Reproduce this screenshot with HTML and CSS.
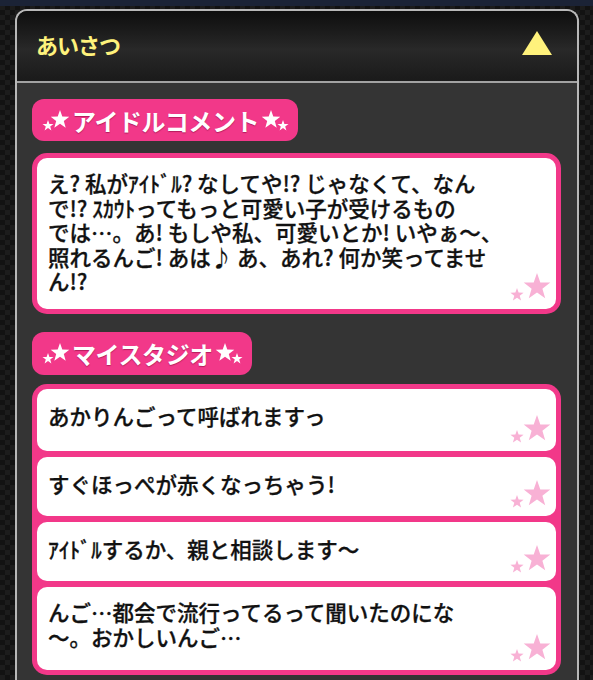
FILE: index.html
```html
<!DOCTYPE html>
<html lang="ja">
<head>
<meta charset="utf-8">
<link rel="stylesheet" href="styles.css">
</head>
<body>
<div class="page">
  <div class="panel">
    <div class="header">
      <span class="title">あいさつ</span>
      <svg class="tri" width="32" height="26" viewBox="0 0 32 26"><polygon points="16,1 31,25 1,25" fill="#fff27c"/></svg>
    </div>
    <div class="content">
      <div class="label">
        <svg class="lstars" width="28" height="24" viewBox="0 0 28 24">
          <polygon fill="#fff" points="6,12 7.4,15.9 11.5,16 8.2,18.5 9.4,22.4 6,20.1 2.6,22.4 3.8,18.5 0.5,16 4.6,15.9"/>
          <polygon fill="#fff" points="18,2 20.3,8.6 27.3,8.8 21.8,13 23.7,19.7 18,15.8 12.3,19.7 14.2,13 8.7,8.8 15.7,8.6"/>
        </svg>
        <span class="ltext">アイドルコメント</span>
        <svg class="lstars" width="28" height="24" viewBox="0 0 28 24">
          <polygon fill="#fff" points="10,2 12.3,8.6 19.3,8.8 13.8,13 15.7,19.7 10,15.8 4.3,19.7 6.2,13 0.7,8.8 7.7,8.6"/>
          <polygon fill="#fff" points="22,12 23.4,15.9 27.5,16 24.2,18.5 25.4,22.4 22,20.1 18.6,22.4 19.8,18.5 16.5,16 20.6,15.9"/>
        </svg>
      </div>
      <div class="card comment">
        <p class="msg">え? 私がｱｲﾄﾞﾙ? なしてや!? じゃなくて、なん<br>で!? ｽｶｳﾄってもっと可愛い子が受けるもの<br>では…。あ! もしや私、可愛いとか! いやぁ〜、<br>照れるんご! あは♪ あ、あれ? 何か笑ってませ<br>ん!?</p>
        <svg class="cstars" width="44" height="34" viewBox="0 0 44 34"><polygon fill="#f8b1d5" points="9,17 10.6,21.6 15.6,21.8 11.7,24.8 13.1,29.6 9,26.8 4.9,29.6 6.3,24.8 2.4,21.8 7.4,21.6"/><polygon fill="#f8b1d5" points="29,2 32.3,11.4 42.3,11.6 34.4,17.7 37.2,27.3 29,21.6 20.8,27.3 23.6,17.7 15.7,11.6 25.7,11.4"/></svg>
      </div>
      <div class="label label2">
        <svg class="lstars" width="28" height="24" viewBox="0 0 28 24">
          <polygon fill="#fff" points="6,12 7.4,15.9 11.5,16 8.2,18.5 9.4,22.4 6,20.1 2.6,22.4 3.8,18.5 0.5,16 4.6,15.9"/>
          <polygon fill="#fff" points="18,2 20.3,8.6 27.3,8.8 21.8,13 23.7,19.7 18,15.8 12.3,19.7 14.2,13 8.7,8.8 15.7,8.6"/>
        </svg>
        <span class="ltext">マイスタジオ</span>
        <svg class="lstars" width="28" height="24" viewBox="0 0 28 24">
          <polygon fill="#fff" points="10,2 12.3,8.6 19.3,8.8 13.8,13 15.7,19.7 10,15.8 4.3,19.7 6.2,13 0.7,8.8 7.7,8.6"/>
          <polygon fill="#fff" points="22,12 23.4,15.9 27.5,16 24.2,18.5 25.4,22.4 22,20.1 18.6,22.4 19.8,18.5 16.5,16 20.6,15.9"/>
        </svg>
      </div>
      <div class="group">
        <div class="item i1">
          <p class="msg">あかりんごって呼ばれますっ</p>
          <svg class="cstars" width="44" height="34" viewBox="0 0 44 34"><polygon fill="#f8b1d5" points="9,17 10.6,21.6 15.6,21.8 11.7,24.8 13.1,29.6 9,26.8 4.9,29.6 6.3,24.8 2.4,21.8 7.4,21.6"/><polygon fill="#f8b1d5" points="29,2 32.3,11.4 42.3,11.6 34.4,17.7 37.2,27.3 29,21.6 20.8,27.3 23.6,17.7 15.7,11.6 25.7,11.4"/></svg>
        </div>
        <div class="item i2">
          <p class="msg">すぐほっぺが赤くなっちゃう!</p>
          <svg class="cstars" width="44" height="34" viewBox="0 0 44 34"><polygon fill="#f8b1d5" points="9,17 10.6,21.6 15.6,21.8 11.7,24.8 13.1,29.6 9,26.8 4.9,29.6 6.3,24.8 2.4,21.8 7.4,21.6"/><polygon fill="#f8b1d5" points="29,2 32.3,11.4 42.3,11.6 34.4,17.7 37.2,27.3 29,21.6 20.8,27.3 23.6,17.7 15.7,11.6 25.7,11.4"/></svg>
        </div>
        <div class="item i3">
          <p class="msg">ｱｲﾄﾞﾙするか、親と相談します〜</p>
          <svg class="cstars" width="44" height="34" viewBox="0 0 44 34"><polygon fill="#f8b1d5" points="9,17 10.6,21.6 15.6,21.8 11.7,24.8 13.1,29.6 9,26.8 4.9,29.6 6.3,24.8 2.4,21.8 7.4,21.6"/><polygon fill="#f8b1d5" points="29,2 32.3,11.4 42.3,11.6 34.4,17.7 37.2,27.3 29,21.6 20.8,27.3 23.6,17.7 15.7,11.6 25.7,11.4"/></svg>
        </div>
        <div class="item i4">
          <p class="msg">んご…都会で流行ってるって聞いたのにな<br>〜。おかしいんご…</p>
          <svg class="cstars" width="44" height="34" viewBox="0 0 44 34"><polygon fill="#f8b1d5" points="9,17 10.6,21.6 15.6,21.8 11.7,24.8 13.1,29.6 9,26.8 4.9,29.6 6.3,24.8 2.4,21.8 7.4,21.6"/><polygon fill="#f8b1d5" points="29,2 32.3,11.4 42.3,11.6 34.4,17.7 37.2,27.3 29,21.6 20.8,27.3 23.6,17.7 15.7,11.6 25.7,11.4"/></svg>
        </div>
      </div>
    </div>
  </div>
</div>
</body>
</html>
```
FILE: styles.css
```css
html, body {
  margin: 0;
  padding: 0;
}
body {
  width: 593px;
  height: 680px;
  overflow: hidden;
  font-family: "Noto Sans CJK JP", "Noto Sans", sans-serif;
  background-color: #161616;
  background-image:
    linear-gradient(#1b2336, #1b2336),
    conic-gradient(#1c1c1c 25%, #121212 0 50%, #1c1c1c 0 75%, #121212 0);
  background-size: 100% 6px, 10px 10px;
  background-repeat: no-repeat, repeat;
}
.page {
  padding-top: 9px;
}
.panel {
  margin-left: 15px;
  width: 560px;
  border: 2px solid #b8b8b8;
  border-bottom: none;
  border-radius: 12px 12px 0 0;
  overflow: hidden;
}
.header {
  height: 70px;
  display: flex;
  align-items: center;
  justify-content: space-between;
  padding: 0 24px 0 19px;
  background: linear-gradient(#0e0e0e 0%, #1c1c1c 30%, #292929 55%, #1a1a1a 100%);
  border-bottom: 2px solid #a2a2a2;
}
.title {
  color: #fff27c;
  font-size: 22px;
  font-weight: 700;
  letter-spacing: -1px;
  margin-top: -4px;
}
.tri {
  display: block;
  margin-top: -6px;
}
.content {
  box-sizing: border-box;
  background: #343434;
  padding: 16px 16px 0 15px;
  height: 597px;
}
.label {
  display: inline-flex;
  align-items: center;
  height: 42px;
  padding: 0 9px 0 10px;
  background: #f23889;
  border-radius: 12px;
  box-sizing: border-box;
}
.label2 {
  margin-top: 18px;
  height: 43px;
}
.lstars {
  display: block;
}
.ltext {
  color: #fff;
  font-size: 24px;
  font-weight: 700;
  padding: 0 2px 0 2px;
  letter-spacing: -0.4px;
  text-shadow: 0 1px 1px rgba(120, 0, 50, 0.5);
}
.card {
  position: relative;
  margin-top: 12px;
  border: 5px solid #f23889;
  border-radius: 15px;
  background: #fff;
}
.comment .msg {
  padding: 13px 12px 15px 11px;
}
.msg {
  margin: 0;
  color: #111;
  font-size: 21.5px;
  font-weight: 500;
  line-height: 24.5px;
  -webkit-text-stroke: 0.3px #111;
}
.cstars {
  position: absolute;
  right: 4px;
  bottom: 4px;
  display: block;
}
.group {
  margin-top: 9px;
  background: #f23889;
  border-radius: 15px;
  padding: 5px;
  display: flex;
  flex-direction: column;
  gap: 6px;
}
.item {
  position: relative;
  background: #fff;
  border-radius: 10px;
}
.item .msg {
  padding: 15px 12px 0 11px;
}
.item.i1 .msg {
  height: 47.5px;
}
.item.i2 .msg {
  height: 43.5px;
}
.item.i3 .msg {
  height: 44.5px;
}
.item.i4 .msg {
  padding-top: 13px;
  height: 70px;
}
```
